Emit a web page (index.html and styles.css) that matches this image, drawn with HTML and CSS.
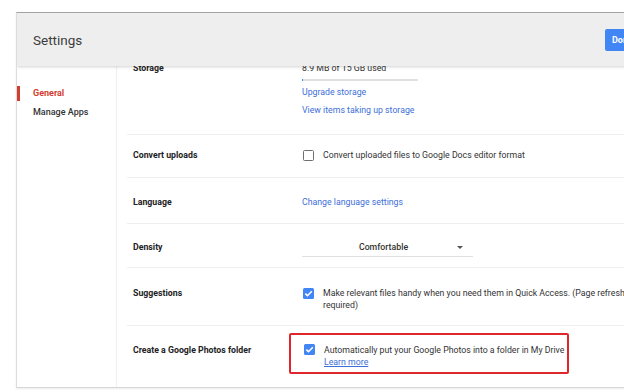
FILE: index.html
```html
<!DOCTYPE html>
<html>
<head>
<meta charset="utf-8">
<link rel="stylesheet" href="styles.css">
</head>
<body>
<div class="page">
  <div class="dialog">
    <header class="header">
      <h1 class="title">Settings</h1>
      <button class="done">Done</button>
    </header>
    <div class="main">
      <nav class="nav">
        <div class="nav-item active">General</div>
        <div class="nav-item">Manage Apps</div>
      </nav>
      <div class="content">
        <div class="scroller">
          <div class="row row-storage">
            <div class="label">Storage</div>
            <div class="value">
              <div class="line">8.9 MB of 15 GB used</div>
              <div class="bar"><div class="bar-fill" style="width:1%"></div></div>
              <div class="line link">Upgrade storage</div>
              <div class="line link gap">View items taking up storage</div>
            </div>
          </div>
          <div class="row row-convert">
            <div class="label">Convert uploads</div>
            <div class="value check-line">
              <span class="cb"></span>
              <span class="line">Convert uploaded files to Google Docs editor format</span>
            </div>
          </div>
          <div class="row row-lang">
            <div class="label">Language</div>
            <div class="value"><div class="line link">Change language settings</div></div>
          </div>
          <div class="row row-density">
            <div class="label">Density</div>
            <div class="value">
              <div class="select">
                <span class="select-text">Comfortable</span>
                <span class="arrow"></span>
              </div>
            </div>
          </div>
          <div class="row row-sugg">
            <div class="label">Suggestions</div>
            <div class="value check-line">
              <span class="cb on"><svg viewBox="0 0 11 11" width="11" height="11"><path d="M2.3 5.6 L4.5 7.7 L8.8 3.3" fill="none" stroke="#fff" stroke-width="1.6"/></svg></span>
              <span class="text">Make relevant files handy when you need them in Quick Access. (Page refresh required)</span>
            </div>
          </div>
          <div class="row row-photos">
            <div class="label">Create a Google Photos folder</div>
            <div class="value">
              <div class="highlight">
                <span class="cb on"><svg viewBox="0 0 11 11" width="11" height="11"><path d="M2.3 5.6 L4.5 7.7 L8.8 3.3" fill="none" stroke="#fff" stroke-width="1.6"/></svg></span>
                <div class="text">
                  <div class="line">Automatically put your Google Photos into a folder in My Drive</div>
                  <div class="line link u">Learn more</div>
                </div>
              </div>
            </div>
          </div>
        </div>
      </div>
    </div>
  </div>
</div>
</body>
</html>
```

FILE: styles.css
```css
* { box-sizing: border-box; }
html, body { margin: 0; padding: 0; background: #fff; overflow: hidden; }
body { font-family: Roboto, "Liberation Sans", Arial, sans-serif; color: #333; width: 624px; height: 392px; }

.page { padding-top: 12px; width: 624px; height: 392px; overflow: hidden; }

.dialog {
  margin-left: 16px;
  width: 660px;
  height: 376px;
  border-top: 1px solid #a4a4a4;
  border-left: 1px solid #dcdcdc;
  border-bottom: 1px solid #d6d6d6;
  box-shadow: 0 1px 2px rgba(0,0,0,0.08);
  display: flex;
  flex-direction: column;
  overflow: hidden;
}

.header {
  position: relative;
  z-index: 2;
  height: 53px;
  flex: none;
  background: #eeeeee;
  display: flex;
  align-items: center;
  padding-left: 16px;
  box-shadow: 0 1px 3px rgba(0,0,0,0.18);
}
.title {
  margin: 0;
  font-size: 13.5px;
  font-weight: 400;
  color: #3c3c3c;
  padding-top: 1px;
}
.done {
  margin-left: auto;
  margin-right: 31px;
  width: 40px;
  height: 22px;
  border: 0;
  border-radius: 2px;
  background: #4285f4;
  color: #fff;
  font-family: inherit;
  font-size: 9px;
  font-weight: 700;
  text-align: left;
  padding-left: 7px;
}

.main { flex: 1; display: flex; min-height: 0; }

.nav {
  width: 100px;
  flex: none;
  border-right: 1px solid #f0f0f0;
  padding-top: 20px;
}
.nav-item {
  height: 15px;
  line-height: 15px;
  font-size: 9px;
  font-weight: 500;
  color: #333;
  padding-left: 13px;
  border-left: 3px solid transparent;
  margin-bottom: 4px;
}
.nav-item.active { color: #d23f31; font-weight: 700; border-left-color: #d23f31; }

.content { flex: 1; overflow: hidden; padding-left: 10px; }
.scroller { margin-top: -18px; }

.row {
  display: flex;
  align-items: flex-start;
  border-bottom: 1px solid #efefef;
  font-size: 8.75px;
  line-height: 12px;
}
.label {
  width: 175px;
  flex: none;
  padding-left: 6px;
  font-weight: 700;
  color: #222;
}
.value { flex: 1; color: #333; }
.link { color: #3d6fd9; }
.u { text-decoration: underline; }

.row-storage { padding: 14px 0 18px; }
.bar { width: 116px; height: 2px; background: #e0e0e0; margin: 5px 0 5px; }
.bar-fill { height: 2px; background: #4285f4; }
.gap { margin-top: 6px; }

.check-line { display: flex; align-items: flex-start; }
.cb {
  flex: none;
  width: 11px;
  height: 11px;
  margin-left: 1px;
  margin-right: 9px;
  border: 1.5px solid #6f6f6f;
  border-radius: 1.5px;
  display: flex;
  align-items: center;
  justify-content: center;
  margin-top: 0.5px;
}
.cb.on { background: #4285f4; border: 0; }
.cb svg { display: block; }

.row-convert { padding: 14px 0 16px; }
.row-lang { padding: 18px 0 15px; }
.row-density { padding: 17px 0 10px; }
.select {
  width: 171px;
  display: flex;
  align-items: center;
  border-bottom: 1px solid #e0e0e0;
  padding-bottom: 3px;
  height: 16px;
}
.select-text { flex: 1; text-align: center; font-weight: 500; color: #333; padding-left: 8px; }
.arrow {
  width: 0; height: 0;
  border-left: 3px solid transparent;
  border-right: 3px solid transparent;
  border-top: 3px solid #555;
  margin-right: 10px;
}
.row-sugg { padding: 19px 0 14px; }
.row-sugg .text { width: 310px; }

.row-photos { padding: 7px 0 14px; }
.row-photos .label { margin-top: 11px; }
.highlight {
  margin-left: -13px;
  width: 280px;
  border: 2px solid #e0262b;
  border-radius: 2px;
  display: flex;
  align-items: flex-start;
  padding: 9px 0 4px 12px;
}
.highlight .cb { margin-top: 0; }
```
